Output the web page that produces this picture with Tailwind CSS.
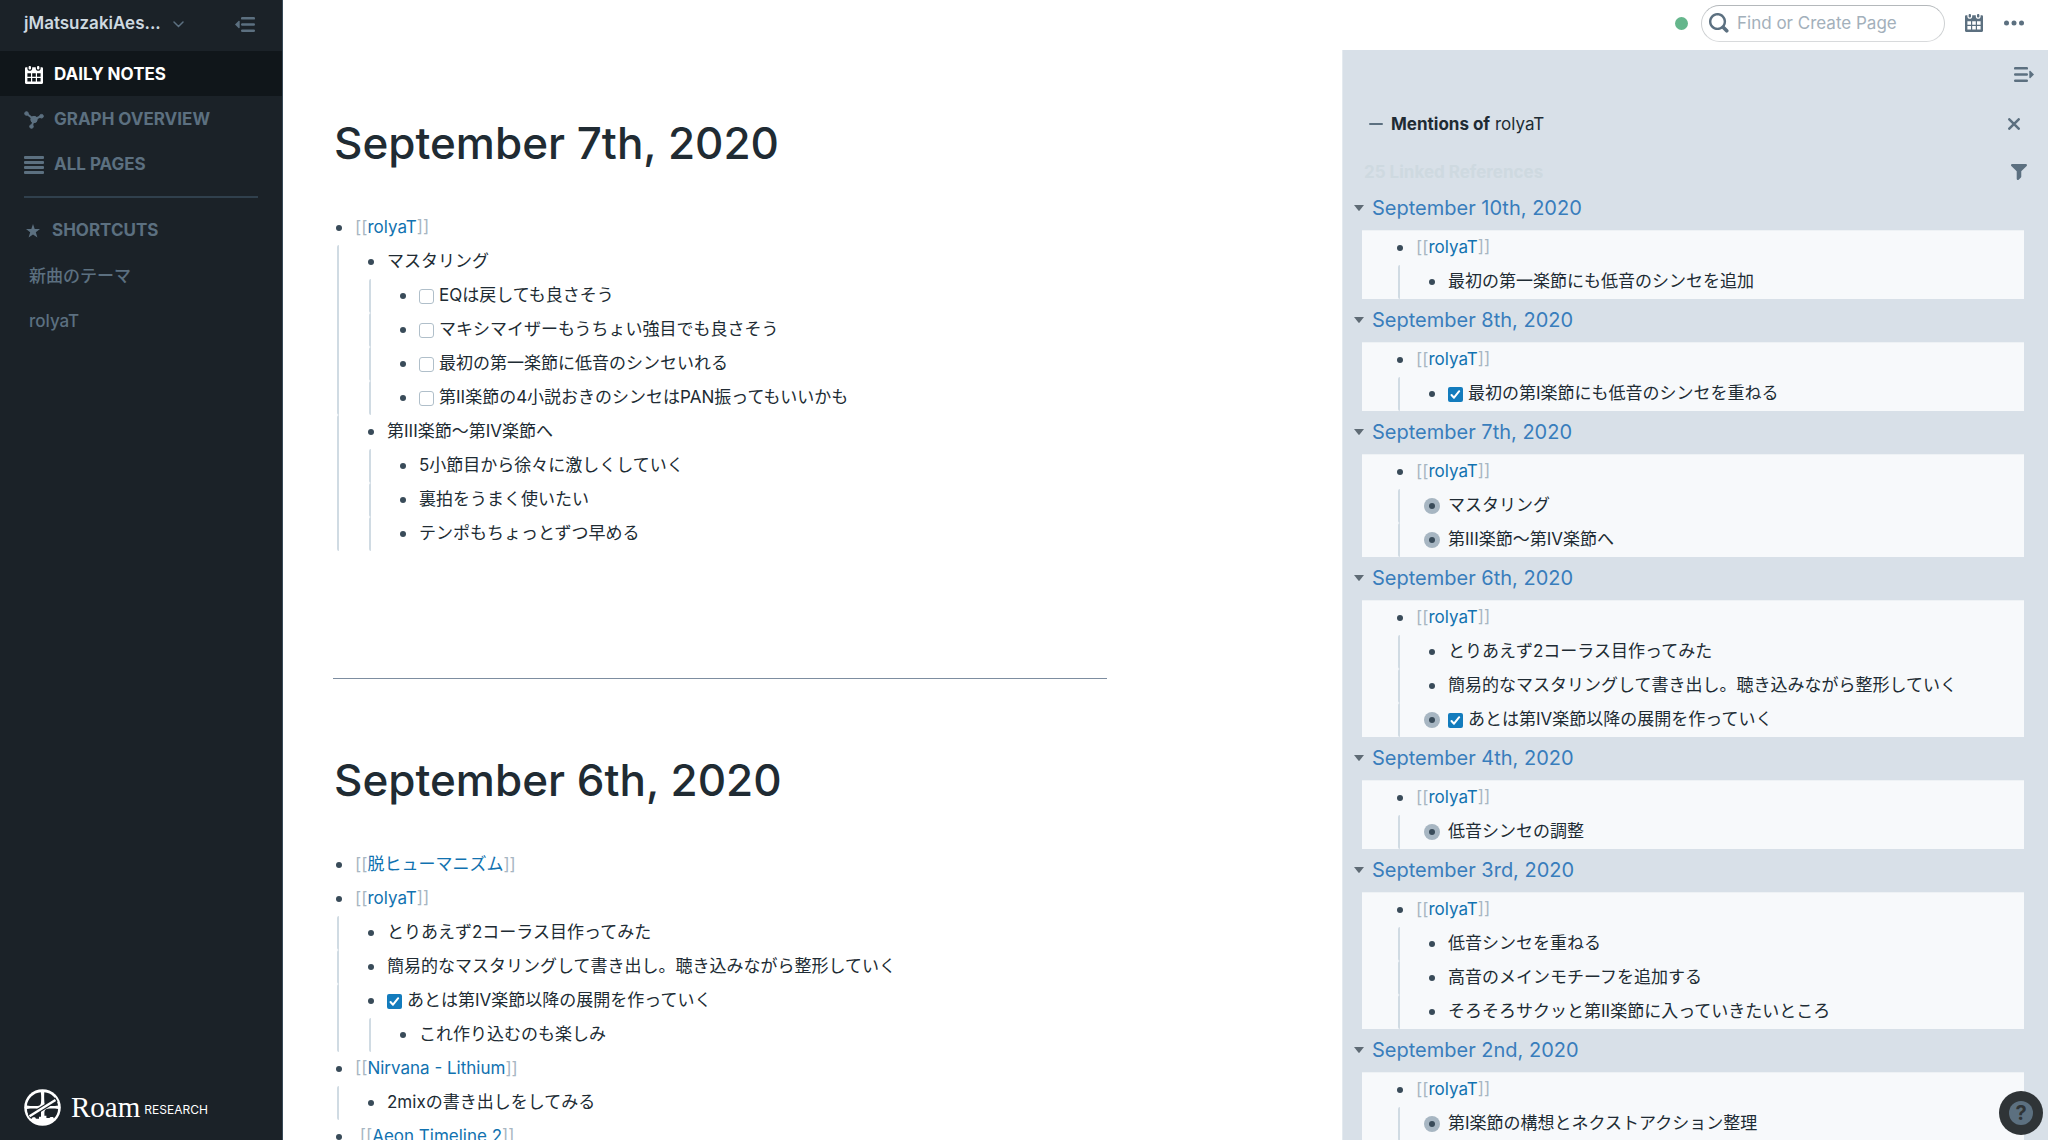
<!DOCTYPE html>
<html lang="ja">
<head>
  <meta charset="UTF-8">
  <meta name="viewport" content="width=device-width, initial-scale=1.0">
  <title>Roam Research</title>
  <script src="https://cdn.jsdelivr.net/npm/@tailwindcss/browser@4"></script>
</head>
<body class="flex h-screen overflow-hidden bg-white font-[Inter,'Noto_Sans_CJK_JP',sans-serif] text-[17px] text-[#202b33]">

  <!-- icon sprites -->
  <svg class="hidden">
    <symbol id="icon-calendar" viewBox="0 0 15 15">
      <path d="M11 3c.6 0 1-.5 1-1V1c0-.6-.4-1-1-1s-1 .4-1 1v1c0 .5.4 1 1 1zm3-2h-1v1c0 1.100-.9 2-2 2s-2-.9-2-2V1H6v1c0 1.100-.9 2-2 2s-2-.9-2-2V1H1c-.6 0-1 .5-1 1v12c0 .6.4 1 1 1h13c.6 0 1-.4 1-1V2c0-.6-.5-1-1-1zM5 13H2v-3h3v3zm0-4H2V6h3v3zm4 4H6v-3h3v3zm0-4H6V6h3v3zm4 4h-3v-3h3v3zm0-4h-3V6h3v3zM4 3c.6 0 1-.5 1-1V1c0-.6-.4-1-1-1S3 .4 3 1v1c0 .5.4 1 1 1z"/>
    </symbol>
    <symbol id="icon-caret" viewBox="0 0 10 6">
      <path d="M0 0h10L5.600 5.600a.8.8 0 0 1-1.200 0z"/>
    </symbol>
  </svg>

  <!-- left sidebar -->
  <aside class="flex w-[283px] shrink-0 flex-col border-r border-[#394b59] bg-[#1b2228] font-semibold text-[#5c7080]">
    <div class="flex h-[51px] items-center pr-[27px] pb-[3px] pl-6">
      <button class="flex items-center gap-3 text-[#ced9e0]">
        jMatsuzakiAes...
        <svg class="h-[7px] w-[11px]" viewBox="0 0 11 7" fill="none" stroke="#5c7080" stroke-width="1.500" stroke-linecap="round"><path d="M1 1l4.500 4.500L10 1"/></svg>
      </button>
      <button class="ml-auto" aria-label="Close sidebar">
        <svg class="h-[15px] w-5" viewBox="0 0 20 15" fill="currentColor"><path d="M0 7.500l3.500-3.600c.5-.5 1.200-.2 1.200.5v6.200c0 .7-.7 1-1.200.5z"/><rect x="6" y="0" width="14" height="2.600" rx="1.200"/><rect x="6" y="6.200" width="14" height="2.600" rx="1.200"/><rect x="6" y="12.400" width="14" height="2.600" rx="1.200"/></svg>
      </button>
    </div>
    <nav>
      <a href="#" class="flex h-[45px] items-center gap-[10px] bg-[#10161a] pt-[2px] pl-6 font-bold text-white">
        <svg class="h-[18px] w-5" fill="currentColor"><use href="#icon-calendar"/></svg>DAILY NOTES
      </a>
      <a href="#" class="flex h-[45px] items-center gap-[10px] pt-[2px] pl-6 font-bold">
        <svg class="h-[18px] w-5" viewBox="0 0 20 18" fill="currentColor" stroke="currentColor"><path d="M2.500 2.500L10 8.500L17.500 5M10 8.500L7.500 16" fill="none" stroke-width="2"/><circle cx="2.500" cy="2.500" r="1.800"/><circle cx="17.500" cy="5.200" r="1.800"/><circle cx="7.500" cy="15.500" r="1.800"/><circle cx="10" cy="8.500" r="3.200"/></svg>GRAPH OVERVIEW
      </a>
      <a href="#" class="flex h-[45px] items-center gap-[10px] pt-[2px] pl-6 font-bold">
        <svg class="h-[18px] w-5" viewBox="0 0 20 18" fill="currentColor"><rect width="20" height="3" rx="1"/><rect y="5" width="20" height="3" rx="1"/><rect y="10" width="20" height="3" rx="1"/><rect y="15" width="20" height="3" rx="1"/></svg>ALL PAGES
      </a>
    </nav>
    <hr class="mx-6 mt-[10px] border-t-2 border-[#30404d]">
    <h2 class="mt-[10px] flex h-[45px] items-center gap-3 pt-px pl-[26px] font-bold">
      <svg class="h-[14px] w-[14px]" viewBox="0 0 14 14" fill="currentColor"><path d="M7 0l1.700 5H14L9.800 8.300 11.400 13.500 7 10.400 2.600 13.500 4.200 8.300 0 5h5.300z"/></svg>SHORTCUTS
    </h2>
    <a href="#" class="flex h-[45px] items-center pt-[2px] pl-[29px] font-medium">新曲のテーマ</a>
    <a href="#" class="flex h-[45px] items-center pt-[2px] pl-[29px] font-medium">rolyaT</a>
    <div class="mt-auto mb-[14px] flex h-[38px] items-center gap-[10px] pl-6 text-white">
      <svg class="h-[37px] w-[37px]" viewBox="0 0 37 37">
        <circle cx="18.500" cy="18.500" r="18.300" fill="#fff"/>
        <g fill="#1b2228">
          <path d="M16.800 3.200c.6 3.500.4 7.500.2 10.500-.2 2.200-1.500 3.300-3.500 3.300-3.500.2-7.500.2-10.600-.4C3.600 9.500 9.500 3.800 16.800 3.200z"/>
          <path d="M20.300 3.200c7.200.6 12.800 6 13.800 13.400-3.200.6-7 .6-10.300.4-2 0-3.300-1.200-3.400-3.300-.2-3-.4-7-.1-10.500z"/>
          <path d="M2.900 20c3.500-.5 7-.5 10.600-.3 2.200.2 3.500 1.500 3.500 3.500v4.600h-2v2h-3l-1-1.500H8.500L7.800 30C4.800 27.500 3 24 2.900 20z"/>
          <path d="M34.100 20c-3.300-.5-7-.5-10.300-.3-2.100.2-3.400 1.500-3.400 3.500v3.600h2v2.200h3l1.200-1h2.500l.8 1.500c2.500-2.500 4.100-5.800 4.200-9.500z"/>
        </g>
        <path d="M5 27.500L32.500 10.500" fill="none" stroke="#1b2228" stroke-width="4.500"/>
        <path d="M5.500 27.200L31.500 11" fill="none" stroke="#fff" stroke-width="2.500"/>
      </svg>
      <div class="flex items-center gap-1 font-normal">
        <span class="font-['Liberation_Serif',serif] text-[29px] leading-[38px]">Roam</span>
        <span class="pt-[5px] text-xs">RESEARCH</span>
      </div>
    </div>
  </aside>

  <div class="flex min-w-0 flex-1 flex-col">
    <!-- top bar -->
    <header class="flex h-[50px] shrink-0 items-center justify-end pr-6 pb-1 text-[#5c7080]">
      <span class="mr-[13px] h-[13px] w-[13px] rounded-full bg-[#65b68c]"></span>
      <label class="mr-5 flex h-[37px] w-[244px] items-center gap-2 rounded-full border border-t-[#b4b8bb] border-r-[#cdd0d2] border-b-[#d8dadc] border-l-[#cdd0d2] pl-[7px]">
        <svg class="h-5 w-5 shrink-0" viewBox="0 0 18 18" fill="currentColor"><path d="M15.550 13.430l-2.670-2.680a6.940 6.940 0 001.110-3.760c0-3.870-3.130-7-7-7s-7 3.130-7 7 3.130 7 7 7c1.390 0 2.680-.42 3.760-1.110l2.680 2.670a1.498 1.498 0 102.120-2.120zm-8.560-1.440c-2.760 0-5-2.240-5-5s2.240-5 5-5 5 2.240 5 5-2.240 5-5 5z" transform="scale(1.100)"/></svg>
        <input type="text" aria-label="Find or Create Page" placeholder="Find or Create Page" class="min-w-0 flex-1 pt-px outline-none placeholder:text-[#a3b0bb]">
      </label>
      <button class="mr-[21px]" aria-label="Calendar"><svg class="h-[18px] w-[18px]" fill="currentColor"><use href="#icon-calendar"/></svg></button>
      <button aria-label="More"><svg class="h-5 w-5" viewBox="0 0 20 20" fill="currentColor"><circle cx="2.500" cy="10" r="2.500"/><circle cx="10" cy="10" r="2.500"/><circle cx="17.500" cy="10" r="2.500"/></svg></button>
    </header>

    <div class="flex min-h-0 flex-1">
      <!-- daily log -->
      <main class="min-w-0 flex-1 overflow-hidden pl-[50px]">
        <article class="max-w-[774px] pt-[63px]">
          <h1 class="pl-px text-[44px] leading-[60px] font-medium">September 7th, 2020</h1>
          <ul id="day-0907" class="mt-[38px] min-h-[467px]"></ul>
          <hr class="border-[#7d8da0]">
        </article>
        <article class="max-w-[774px] pt-[71px]">
          <h1 class="pl-px text-[44px] leading-[60px] font-medium">September 6th, 2020</h1>
          <ul id="day-0906" class="mt-[38px]"></ul>
        </article>
      </main>

      <!-- right sidebar -->
      <aside class="flex w-2/5 shrink-0 flex-col overflow-hidden border-l border-[#e4eaef] bg-[#d8e0e8]">
        <div class="flex h-[48px] shrink-0 items-center justify-end pr-[14px] text-[#5c7080]">
          <button aria-label="Close right sidebar">
            <svg class="h-[15px] w-5" viewBox="0 0 20 15" fill="currentColor"><path d="M20 7.500l-3.500-3.600c-.5-.5-1.200-.2-1.200.5v6.200c0 .7.7 1 1.200.5z"/><rect y="0" width="14" height="2.600" rx="1.200"/><rect y="6.200" width="14" height="2.600" rx="1.200"/><rect y="12.400" width="14" height="2.600" rx="1.200"/></svg>
          </button>
        </div>
        <div class="flex h-[52px] shrink-0 items-center pr-7 pl-[26px]">
          <button class="mr-2 h-[2px] w-[14px] rounded-full bg-[#5c7080]" aria-label="Collapse"></button>
          <span class="pt-[2px]"><b class="font-bold">Mentions of</b> rolyaT</span>
          <button class="ml-auto" aria-label="Close">
            <svg class="h-3 w-3" viewBox="0 0 12 12" fill="none" stroke="#5c7080" stroke-width="2.500" stroke-linecap="round"><path d="M1.300 1.300l9.400 9.400M10.700 1.300L1.300 10.700"/></svg>
          </button>
        </div>
        <div class="flex h-[37px] shrink-0 items-end justify-between pr-[21px] pl-[21px]">
          <strong class="leading-[30px] font-bold text-[#ced9e0]">25 Linked References</strong>
          <button class="mb-[7px]" aria-label="Filter">
            <svg class="h-4 w-4" viewBox="1 1 14 14" fill="#5c7080"><path d="M13.990.990h-12a1.003 1.003 0 00-.710 1.710l4.710 4.710V14a1.003 1.003 0 001.710.710l2-2c.180-.180.290-.430.290-.710V7.410L14.700 2.700a1.003 1.003 0 00-.710-1.710z"/></svg>
          </button>
        </div>
        <div id="references" class="pr-6 pl-[19px]"></div>
      </aside>
    </div>
  </div>

  <button class="fixed right-[5px] bottom-[5px] flex h-11 w-11 items-center justify-center rounded-full bg-[#2f3437]" aria-label="Help">
    <span class="flex h-6 w-6 items-center justify-center rounded-full bg-[#5c7080] text-xl leading-6 font-bold text-[#2f3437]">?</span>
  </button>

  <script>
    // Block: { link | text, todo, done, closed, children }
    const rolyaT = (...children) => ({ link: 'rolyaT', children });
    const t = (text, opts) => ({ text, ...opts });

    const sep7 = [
      rolyaT(
        t('マスタリング', { children: [
          t('EQは戻しても良さそう', { todo: true }),
          t('マキシマイザーもうちょい強目でも良さそう', { todo: true }),
          t('最初の第一楽節に低音のシンセいれる', { todo: true }),
          t('第II楽節の4小説おきのシンセはPAN振ってもいいかも', { todo: true })
        ] }),
        t('第III楽節〜第IV楽節へ', { children: [
          t('5小節目から徐々に激しくしていく'),
          t('裏拍をうまく使いたい'),
          t('テンポもちょっとずつ早める')
        ] })
      )
    ];

    const sep6 = [
      { link: '脱ヒューマニズム' },
      rolyaT(
        t('とりあえず2コーラス目作ってみた'),
        t('簡易的なマスタリングして書き出し。聴き込みながら整形していく'),
        t('あとは第IV楽節以降の展開を作っていく', { done: true, children: [t('これ作り込むのも楽しみ')] })
      ),
      { link: 'Nirvana - Lithium', children: [t('2mixの書き出しをしてみる')] },
      { link: 'Aeon Timeline 2', lead: '&nbsp;' }
    ];

    const references = [
      ['September 10th, 2020', rolyaT(t('最初の第一楽節にも低音のシンセを追加'))],
      ['September 8th, 2020', rolyaT(t('最初の第I楽節にも低音のシンセを重ねる', { done: true }))],
      ['September 7th, 2020', rolyaT(t('マスタリング', { closed: true }), t('第III楽節〜第IV楽節へ', { closed: true }))],
      ['September 6th, 2020', rolyaT(
        t('とりあえず2コーラス目作ってみた'),
        t('簡易的なマスタリングして書き出し。聴き込みながら整形していく'),
        t('あとは第IV楽節以降の展開を作っていく', { done: true, closed: true })
      )],
      ['September 4th, 2020', rolyaT(t('低音シンセの調整', { closed: true }))],
      ['September 3rd, 2020', rolyaT(
        t('低音シンセを重ねる'),
        t('高音のメインモチーフを追加する'),
        t('そろそろサクッと第II楽節に入っていきたいところ')
      )],
      ['September 2nd, 2020', rolyaT(t('第I楽節の構想とネクストアクション整理', { closed: true }))]
    ];

    function content(block) {
      if (block.link) {
        return `<span class="whitespace-pre text-[#a7b6c2]">${block.lead || ''}[[<a href="#" class="text-[#1172b0]">${block.link}</a>]]</span>`;
      }
      if (block.todo || block.done) {
        return `<label class="flex items-center gap-[5px]">
          <input type="checkbox" ${block.done ? 'checked' : ''} class="peer h-[15px] w-[15px] appearance-none rounded-[3px] border border-[#b0bfca] bg-white checked:hidden">
          <svg class="hidden h-[15px] w-[15px] rounded-[2px] bg-[#137cbd] peer-checked:block" viewBox="0 0 15 15" fill="none" stroke="white" stroke-width="2" stroke-linecap="round" stroke-linejoin="round"><path d="M3.500 8l2.500 2.700L11.200 4.200"/></svg>
          <span>${block.text}</span>
        </label>`;
      }
      return `<span>${block.text}</span>`;
    }

    function row(block) {
      const halo = block.closed ? 'bg-[#a7b6c2]' : '';
      return `<div class="flex h-[34px] items-center gap-2 whitespace-nowrap">
        <span class="-ml-[2px] flex h-4 w-4 shrink-0 items-center justify-center rounded-full ${halo}"><i class="h-[6px] w-[6px] rounded-full bg-[#394b59]"></i></span>
        ${content(block)}
      </div>`;
    }

    function tree(blocks) {
      return blocks.map(b => `<li class="rounded-xs border-l-2 border-[#d0dbe3] pl-[26px]">${row(b)}${b.children ? `<ul class="ml-1">${tree(b.children)}</ul>` : ''}</li>`).join('');
    }

    function root(blocks) {
      return blocks.map(b => `<li>${row(b)}${b.children ? `<ul class="ml-1">${tree(b.children)}</ul>` : ''}</li>`).join('');
    }

    document.getElementById('day-0907').innerHTML = root(sep7);
    document.getElementById('day-0906').innerHTML = root(sep6);
    document.getElementById('references').innerHTML = references.map(([date, block]) => `
      <section>
        <h3 class="-ml-2 flex h-[43px] items-center gap-2 pb-[2px] text-xl text-[#387dbc]">
          <svg class="h-[6px] w-[10px] fill-[#5f6b75]"><use href="#icon-caret"/></svg>
          <a href="#">${date}</a>
        </h3>
        <ul class="border-t border-[#eef2f5] bg-[#f7f9fb] pl-[32px]">${root([block])}</ul>
      </section>`).join('');
  </script>
</body>
</html>
